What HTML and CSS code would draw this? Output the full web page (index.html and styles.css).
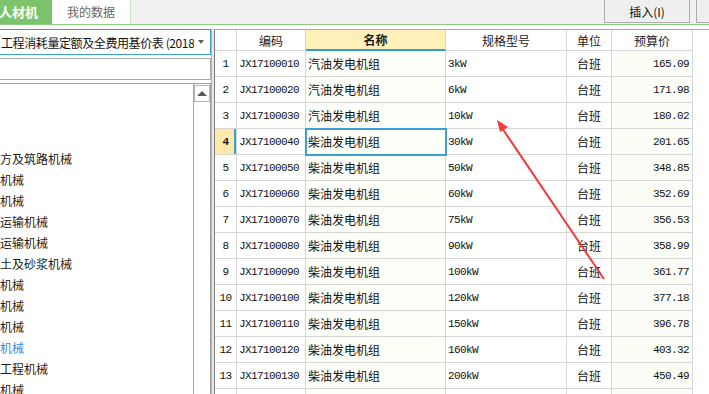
FILE: index.html
```html
<!DOCTYPE html>
<html lang="zh-CN">
<head>
    <meta charset="UTF-8">
    <title>人材机</title>
    <link rel="stylesheet" href="styles.css">
</head>
<body>
<div class="app">
    <header class="topbar">
        <div class="tab tab-active">人材机</div>
        <div class="tab">我的数据</div>
        <div class="topbar-fill"></div>
        <button class="btn">插入(I)</button>
        <button class="btn btn-cut"></button>
    </header>

    <div class="main">
        <aside class="side">
            <div class="select">
                <span class="select-text">工程消耗量定额及全费用基价表 (2018</span>
                <span class="select-arrow"></span>
            </div>
            <div class="search"></div>
            <div class="tree">
                <ul class="tree-list">
                    <li>方及筑路机械</li>
                    <li>机械</li>
                    <li>机械</li>
                    <li>运输机械</li>
                    <li>运输机械</li>
                    <li>土及砂浆机械</li>
                    <li>机械</li>
                    <li>机械</li>
                    <li>机械</li>
                    <li class="current">机械</li>
                    <li>工程机械</li>
                    <li>机械</li>
                </ul>
                <div class="scrollbar">
                    <div class="scroll-up"></div>
                </div>
            </div>
        </aside>

        <div class="splitter"></div>

        <div class="grid">
            <table>
                <thead>
                    <tr>
                        <th class="c-no"></th>
                        <th class="c-code">编码</th>
                        <th class="c-name sorted">名称</th>
                        <th class="c-spec">规格型号</th>
                        <th class="c-unit">单位</th>
                        <th class="c-price">预算价</th>
                    </tr>
                </thead>
                <tbody>
                    <tr><td class="c-no">1</td><td class="c-code">JX17100010</td><td class="c-name">汽油发电机组</td><td class="c-spec">3kW</td><td class="c-unit">台班</td><td class="c-price">165.09</td></tr>
                    <tr><td class="c-no">2</td><td class="c-code">JX17100020</td><td class="c-name">汽油发电机组</td><td class="c-spec">6kW</td><td class="c-unit">台班</td><td class="c-price">171.98</td></tr>
                    <tr><td class="c-no">3</td><td class="c-code">JX17100030</td><td class="c-name">汽油发电机组</td><td class="c-spec">10kW</td><td class="c-unit">台班</td><td class="c-price">180.02</td></tr>
                    <tr class="selected"><td class="c-no">4</td><td class="c-code">JX17100040</td><td class="c-name active">柴油发电机组</td><td class="c-spec">30kW</td><td class="c-unit">台班</td><td class="c-price">201.65</td></tr>
                    <tr><td class="c-no">5</td><td class="c-code">JX17100050</td><td class="c-name">柴油发电机组</td><td class="c-spec">50kW</td><td class="c-unit">台班</td><td class="c-price">348.85</td></tr>
                    <tr><td class="c-no">6</td><td class="c-code">JX17100060</td><td class="c-name">柴油发电机组</td><td class="c-spec">60kW</td><td class="c-unit">台班</td><td class="c-price">352.69</td></tr>
                    <tr><td class="c-no">7</td><td class="c-code">JX17100070</td><td class="c-name">柴油发电机组</td><td class="c-spec">75kW</td><td class="c-unit">台班</td><td class="c-price">356.53</td></tr>
                    <tr><td class="c-no">8</td><td class="c-code">JX17100080</td><td class="c-name">柴油发电机组</td><td class="c-spec">90kW</td><td class="c-unit">台班</td><td class="c-price">358.99</td></tr>
                    <tr><td class="c-no">9</td><td class="c-code">JX17100090</td><td class="c-name">柴油发电机组</td><td class="c-spec">100kW</td><td class="c-unit">台班</td><td class="c-price">361.77</td></tr>
                    <tr><td class="c-no">10</td><td class="c-code">JX17100100</td><td class="c-name">柴油发电机组</td><td class="c-spec">120kW</td><td class="c-unit">台班</td><td class="c-price">377.18</td></tr>
                    <tr><td class="c-no">11</td><td class="c-code">JX17100110</td><td class="c-name">柴油发电机组</td><td class="c-spec">150kW</td><td class="c-unit">台班</td><td class="c-price">396.78</td></tr>
                    <tr><td class="c-no">12</td><td class="c-code">JX17100120</td><td class="c-name">柴油发电机组</td><td class="c-spec">160kW</td><td class="c-unit">台班</td><td class="c-price">403.32</td></tr>
                    <tr><td class="c-no">13</td><td class="c-code">JX17100130</td><td class="c-name">柴油发电机组</td><td class="c-spec">200kW</td><td class="c-unit">台班</td><td class="c-price">450.49</td></tr>
                    <tr><td class="c-no"></td><td class="c-code"></td><td class="c-name"></td><td class="c-spec"></td><td class="c-unit"></td><td class="c-price"></td></tr>
                </tbody>
            </table>
        </div>
    </div>

    <!-- annotation arrow drawn over the screenshot -->
    <svg class="arrow" width="709" height="394" viewBox="0 0 709 394">
        <line x1="604" y1="279" x2="502" y2="128" stroke="#f23b3b" stroke-width="2"/>
        <path d="M497 120 L508 127 L500 132 Z" fill="#f23b3b"/>
    </svg>
</div>
</body>
</html>
```

FILE: styles.css
```css
* {
    box-sizing: border-box;
}
html, body {
    margin: 0;
    padding: 0;
}
body {
    font-family: "Noto Sans CJK SC", "DejaVu Sans", sans-serif;
    font-size: 12px;
    color: #111;
    background: #fff;
}
.app {
    position: relative;
    width: 709px;
    height: 394px;
    overflow: hidden;
    display: flex;
    flex-direction: column;
}

/* top bar */
.topbar {
    display: flex;
    height: 25px;
    background: #f0f0f0;
    border-bottom: 1px solid #8dcc7e;
    flex-shrink: 0;
}
.tab {
    width: 79px;
    height: 24px;
    line-height: 24px;
    text-align: center;
    background: #fff;
    color: #666;
    border-right: 1px solid #c6e4bd;
}
.tab-active {
    width: 52px;
    background: #7bc46c;
    color: #fff;
    font-weight: bold;
    font-size: 13px;
    text-align: left;
    text-indent: -1px;
    border-right: none;
}
.topbar-fill {
    flex: 1;
}
.btn {
    width: 86px;
    height: 23px;
    margin: 0 6px 0 0;
    padding: 0;
    background: #efefef;
    border: 1px solid #adadad;
    border-top: none;
    font-family: inherit;
    font-size: 12px;
    color: #111;
}
.btn-cut {
    width: 13px;
    margin: 0;
    border-right: none;
}

/* main area */
.main {
    flex: 1;
    display: flex;
    padding-top: 4px;
    min-height: 0;
}
.side {
    width: 217px;
    margin-left: -6px;
    display: flex;
    flex-direction: column;
    gap: 3px;
}
.select {
    height: 26px;
    border: 1px solid #3aa0d6;
    display: flex;
    align-items: center;
    padding-left: 6px;
    background: #fff;
}
.select-text {
    flex: 1;
    white-space: nowrap;
    overflow: hidden;
    letter-spacing: -0.4px;
}
.select-arrow {
    width: 0;
    height: 0;
    margin: 0 6px 0 4px;
    border-left: 3px solid transparent;
    border-right: 3px solid transparent;
    border-top: 4px solid #606060;
}
.search {
    height: 22px;
    border: 1px solid #a8a8a8;
    background: #fff;
}
.tree {
    flex: 1;
    display: flex;
    border-top: 1px solid #a0a0a0;
    border-right: 1px solid #a0a0a0;
    min-height: 0;
}
.tree-list {
    flex: 1;
    list-style: none;
    margin: 0;
    padding: 64px 0 0 6px;
}
.tree-list li {
    height: 21px;
    line-height: 21px;
    white-space: nowrap;
    color: #1a1a1a;
}
.tree-list li.current {
    color: #1a90e6;
}
.scrollbar {
    width: 17px;
    border-left: 1px solid #a8a8a8;
    padding-top: 1px;
}
.scroll-up {
    height: 17px;
    border: 1px solid #b4b4b4;
    display: flex;
    align-items: center;
    justify-content: center;
}
.scroll-up::before {
    content: "";
    border-left: 5px solid transparent;
    border-right: 5px solid transparent;
    border-bottom: 5px solid #5a5a5a;
}
.splitter {
    width: 3px;
    border-left: 1px solid #b0b0b0;
    background: #e8e8e8;
}

/* grid */
.grid {
    flex: 1;
    border-left: 1px solid #7c7c7c;
    border-top: 1px solid #a8a8a8;
    overflow: hidden;
}
table {
    border-collapse: separate;
    border-spacing: 0;
    table-layout: fixed;
    width: 478px;
}
th, td {
    border-right: 1px solid #d6d6d6;
    border-bottom: 1px solid #d6d6d6;
    padding: 0 2px;
    white-space: nowrap;
    overflow: hidden;
}
th {
    height: 21px;
    font-weight: normal;
    text-align: center;
    color: #1a1a1a;
    background: #fff;
}
td {
    height: 26px;
}
th.c-no { width: 22px; }
th.c-code { width: 69px; }
th.c-name { width: 140px; }
th.c-spec { width: 121px; }
th.c-unit { width: 45px; }
th.c-price { width: 81px; }

th.sorted {
    font-weight: bold;
    background: #ffefb8;
    border-bottom: 2px solid #2f9fd6;
}
td.c-no, td.c-code, td.c-spec, td.c-price {
    font-family: "Liberation Mono", "DejaVu Sans Mono", monospace;
    font-size: 11px;
    letter-spacing: -0.6px;
}
td.c-no {
    text-align: center;
}
td.c-name {
    background: #fefef8;
    font-size: 12px;
}
td.c-unit {
    text-align: center;
}
td.c-price {
    text-align: right;
    padding-right: 3px;
    background: #fdfdf7;
}
tr.selected td.c-no {
    background: #ffe9ab;
    font-weight: bold;
    box-shadow: inset -2px 0 #3aa0d6;
}
td.active {
    outline: 2px solid #3aa0d6;
    outline-offset: -1px;
}

.arrow {
    position: absolute;
    left: 0;
    top: 0;
    pointer-events: none;
}
```
